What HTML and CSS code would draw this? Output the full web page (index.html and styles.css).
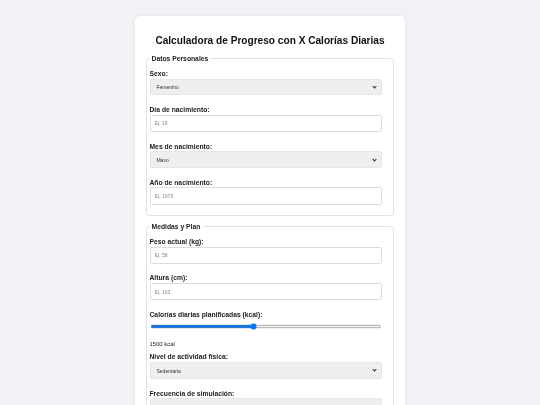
FILE: index.html
```html
<!DOCTYPE html>
<html lang="es">
<head>
<meta charset="utf-8">
<title>Calculadora de Progreso</title>
<link rel="stylesheet" href="styles.css">
</head>
<body>
<div class="page">
  <div class="card">
    <h2 class="title">Calculadora de Progreso con X Calorías Diarias</h2>
    <fieldset class="group">
      <legend>Datos Personales</legend>
      <div class="field">
        <label for="sexo">Sexo:</label>
        <div class="select-wrap">
          <select id="sexo" class="control">
            <option selected>Femenino</option>
            <option>Masculino</option>
          </select>
        </div>
      </div>
      <div class="field">
        <label for="dia">Día de nacimiento:</label>
        <input id="dia" class="control" type="number" placeholder="Ej: 16">
      </div>
      <div class="field">
        <label for="mes">Mes de nacimiento:</label>
        <div class="select-wrap">
          <select id="mes" class="control">
            <option>Enero</option>
            <option>Febrero</option>
            <option>Marzo</option>
            <option>Abril</option>
            <option selected>Mayo</option>
            <option>Junio</option>
            <option>Julio</option>
            <option>Agosto</option>
            <option>Septiembre</option>
            <option>Octubre</option>
            <option>Noviembre</option>
            <option>Diciembre</option>
          </select>
        </div>
      </div>
      <div class="field">
        <label for="anio">Año de nacimiento:</label>
        <input id="anio" class="control" type="number" placeholder="Ej: 1976">
      </div>
    </fieldset>
    <fieldset class="group">
      <legend>Medidas y Plan</legend>
      <div class="field">
        <label for="peso">Peso actual (kg):</label>
        <input id="peso" class="control" type="number" placeholder="Ej: 58">
      </div>
      <div class="field">
        <label for="altura">Altura (cm):</label>
        <input id="altura" class="control" type="number" placeholder="Ej: 163">
      </div>
      <div class="field field-range">
        <label for="kcal">Calorías diarias planificadas (kcal):</label>
        <input id="kcal" class="range" type="range" min="1000" max="2125" step="25" value="1500">
        <span class="range-value">1500 kcal</span>
      </div>
      <div class="field">
        <label for="nivel">Nivel de actividad física:</label>
        <div class="select-wrap">
          <select id="nivel" class="control">
            <option selected>Sedentaria</option>
            <option>Ligera</option>
            <option>Moderada</option>
            <option>Intensa</option>
          </select>
        </div>
      </div>
      <div class="field">
        <label for="freq">Frecuencia de simulación:</label>
        <div class="select-wrap">
          <select id="freq" class="control">
            <option selected>Diaria</option>
            <option>Semanal</option>
            <option>Mensual</option>
          </select>
        </div>
      </div>
    </fieldset>
  </div>
</div>
</body>
</html>
```
FILE: styles.css
```css
html, body {
  margin: 0;
  padding: 0;
  background: #f0f2f5;
}

.page {
  zoom: 0.421875;
  font-family: "Liberation Sans", Arial, sans-serif;
  color: #222;
  padding: 39px 0 40px;
  will-change: transform;
}

.card {
  box-sizing: border-box;
  width: 640px;
  margin: 0 auto;
  padding: 25px;
  background: #fff;
  border-radius: 12px;
  box-shadow: 0 2px 10px rgba(0, 0, 0, 0.08);
}

.title {
  margin: 20px 0 20px;
  font-size: 24px;
  font-weight: bold;
  color: #111;
  text-align: center;
  line-height: normal;
}

.group {
  margin: 0 0 16px;
  padding: 19px 26px 0 7px;
  border: 1px solid #e1e1e1;
  border-radius: 8px;
}

.group legend {
  padding: 0 5px;
  font-size: 16px;
  font-weight: bold;
  color: #222;
}

.field {
  margin-bottom: 25px;
}

.field label {
  display: block;
  margin-bottom: 4px;
  font-size: 16px;
  font-weight: bold;
  color: #1a1a1a;
}

.control {
  box-sizing: border-box;
  display: block;
  width: 100%;
  padding: 11px 10px;
  font-family: "Liberation Sans", Arial, sans-serif;
  font-size: 12px;
  color: #333;
  border: 1px solid #dcdcdc;
  border-radius: 5px;
  background: #fff;
}

.select-wrap {
  position: relative;
}

.select-wrap::after {
  content: "";
  position: absolute;
  right: 14px;
  top: 50%;
  width: 5px;
  height: 5px;
  margin-top: -5px;
  border-right: 2.5px solid #222;
  border-bottom: 2.5px solid #222;
  transform: rotate(45deg);
  pointer-events: none;
}

select.control {
  -webkit-appearance: none;
  appearance: none;
  background: #efefef;
  border-color: #e6e6e6;
  height: 40px;
  padding-left: 14px;
}

input.control::placeholder {
  color: #8a8a8a;
}

.range {
  display: block;
  width: 100%;
  height: 16px;
  margin: 12px 0 27px;
}

.range-value {
  display: block;
  font-size: 14px;
  color: #222;
}

.field-range {
  margin-bottom: 15px;
}
```
